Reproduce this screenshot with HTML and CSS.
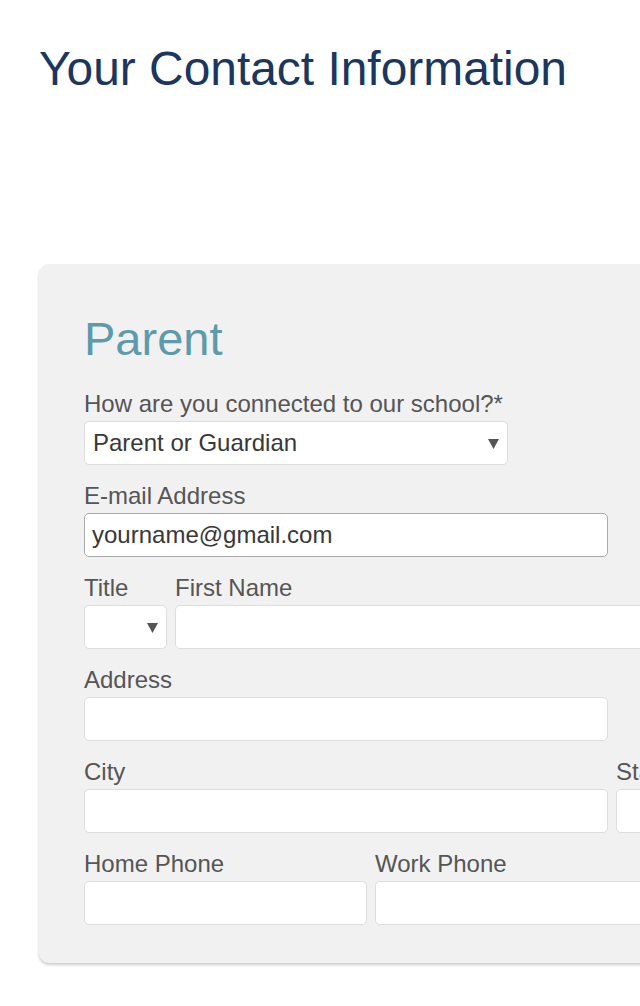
FILE: index.html
```html
<!DOCTYPE html>
<html lang="en">
<head>
<meta charset="utf-8">
<title>Your Contact Information</title>
<link rel="stylesheet" href="styles.css">
</head>
<body>
<div class="page">
  <h1 class="page-title">Your Contact Information</h1>
  <section class="card">
    <h2 class="card-title">Parent</h2>
    <div class="rows">
      <div class="row">
        <div class="field w-connect">
          <label class="label">How are you connected to our school?*</label>
          <div class="control select">
            <span class="value">Parent or Guardian</span>
            <svg class="arrow" width="11" height="11" viewBox="0 0 11 11"><polygon points="0,1 11,1 5.5,11" fill="#555"/></svg>
          </div>
        </div>
      </div>
      <div class="row">
        <div class="field w-wide">
          <label class="label">E-mail Address</label>
          <div class="control input focus"><span class="value">yourname@gmail.com</span></div>
        </div>
      </div>
      <div class="row">
        <div class="field w-title">
          <label class="label">Title</label>
          <div class="control select">
            <span class="value"></span>
            <svg class="arrow" width="11" height="11" viewBox="0 0 11 11"><polygon points="0,1 11,1 5.5,11" fill="#555"/></svg>
          </div>
        </div>
        <div class="field w-wide">
          <label class="label">First Name</label>
          <div class="control input"></div>
        </div>
      </div>
      <div class="row">
        <div class="field w-wide">
          <label class="label">Address</label>
          <div class="control input"></div>
        </div>
      </div>
      <div class="row">
        <div class="field w-wide">
          <label class="label">City</label>
          <div class="control input"></div>
        </div>
        <div class="field w-state">
          <label class="label">State</label>
          <div class="control input"></div>
        </div>
      </div>
      <div class="row">
        <div class="field w-half">
          <label class="label">Home Phone</label>
          <div class="control input"></div>
        </div>
        <div class="field w-half">
          <label class="label">Work Phone</label>
          <div class="control input"></div>
        </div>
      </div>
    </div>
  </section>
</div>
</body>
</html>
```

FILE: styles.css
```css
html {
  overflow: hidden;
  background: #ffffff;
}

body {
  margin: 0;
  padding: 0;
  font-family: "Liberation Sans", Arial, Helvetica, sans-serif;
}

.page {
  padding: 0 0 40px 39px;
  width: 1100px;
}

.page-title {
  margin: 0;
  padding-top: 41px;
  font-size: 47.9px;
  line-height: 56px;
  font-weight: normal;
  color: #1b365f;
}

.card {
  margin-top: 167px;
  width: 1000px;
  background: #f1f1f1;
  border-radius: 10px;
  padding: 48px 45px 38px;
  box-shadow: 0 2px 3px rgba(0, 0, 0, 0.2);
}

.card-title {
  margin: 0 0 24px;
  font-size: 47px;
  line-height: 54px;
  font-weight: normal;
  color: #5c9bac;
}

.rows {
  display: flex;
  flex-direction: column;
  gap: 17px;
}

.row {
  display: flex;
  gap: 8px;
}

.field {
  display: flex;
  flex-direction: column;
}

.w-connect { width: 424px; }
.w-wide { width: 524px; }
.w-title { width: 83px; }
.w-state { width: 150px; }
.w-half { width: 283px; }

.label {
  display: block;
  font-size: 24px;
  line-height: 28px;
  color: #555555;
  margin-bottom: 3px;
  white-space: nowrap;
}

.control {
  box-sizing: border-box;
  height: 44px;
  border: 1px solid #dddddd;
  border-radius: 5px;
  background: #ffffff;
  padding: 0 8px 0 7px;
  display: flex;
  align-items: center;
  justify-content: space-between;
  font-size: 24px;
  color: #383838;
}

.control.focus {
  border-color: #a9a9a9;
}

.value {
  white-space: nowrap;
}

.select .value {
  padding-left: 1px;
}

.arrow {
  flex: none;
}
```
